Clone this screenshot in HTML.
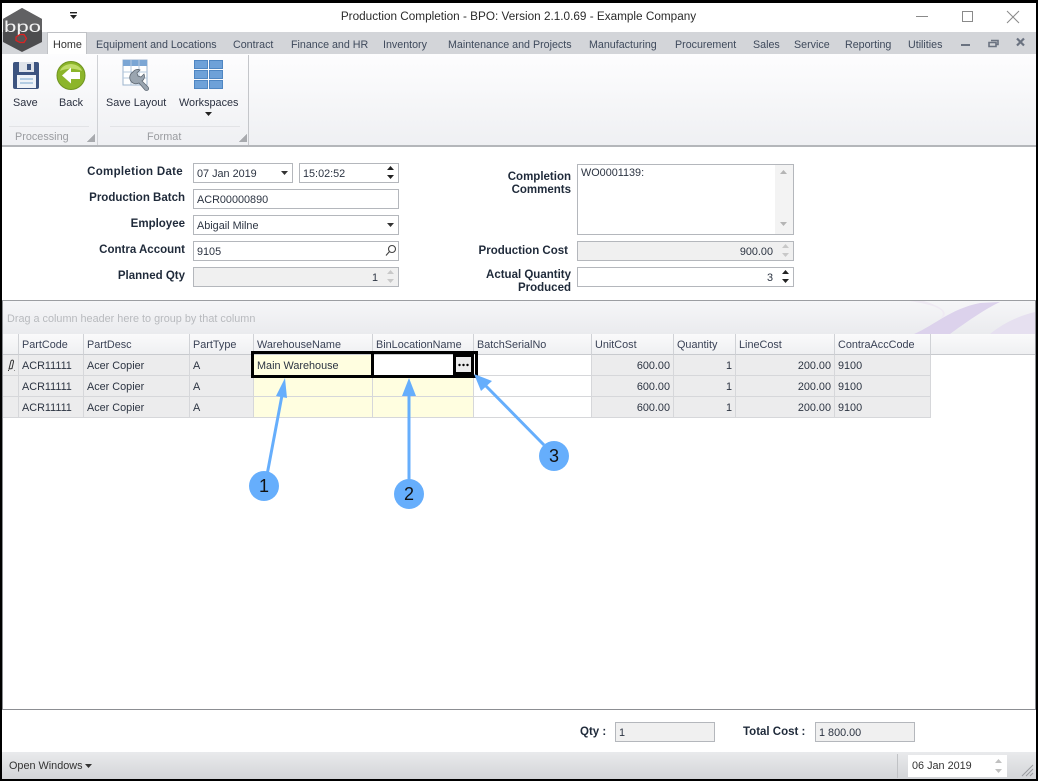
<!DOCTYPE html>
<html><head><meta charset="utf-8"><style>
*{box-sizing:border-box}
html,body{margin:0;padding:0;width:1038px;height:781px;overflow:hidden;background:#fff}
body{position:relative;font:10.85px/14px "Liberation Sans",sans-serif;color:#2a3040}
div,span.a{position:absolute;white-space:nowrap}
svg{position:absolute;overflow:visible}
.tab{top:38px;color:#3f4a5c;font-size:10.7px}
.lb{font-weight:bold;color:#1f2a3a;text-align:right;font-size:11.5px;line-height:13px}
.in{background:#fff;border:1px solid #b4b7bc;height:20px;padding:3px 0 0 3px;color:#2c3442}
.dis{background:#f0f0f0}
.gh{top:334px;height:21px;background:linear-gradient(#fafafb,#eff0f2);border-right:1px solid #d0d2d6;border-bottom:1px solid #c8cace;padding:4px 0 0 3px;color:#3a4256}
.c{height:21px;border-right:1px solid #d6d7da;border-bottom:1px solid #d6d7da;padding:4px 3px 0 3px;color:#2c3442}
.g{background:#ececed}.y{background:#fffee0}.w{background:#fff}.r{text-align:right}
</style></head><body>
<!-- title bar -->
<div style="left:0;top:0;width:1038px;height:32px;background:#fff"></div>
<div style="left:0;top:10px;width:1037px;text-align:center;font-size:11.75px;line-height:14px;color:#2b2b2b">Production Completion - BPO: Version 2.1.0.69 - Example Company</div>
<svg style="left:69px;top:12px" width="10" height="9"><rect x="1" y="0" width="7" height="1.4" fill="#222"/><path d="M1 3h7L4.500 7z" fill="#222"/></svg>
<svg style="left:915px;top:8px" width="110" height="16" fill="none" stroke="#8a8a8a"><path d="M1 8.500h12M47.500 3.500h10v10h-10zM92 3l12 12M104 3L92 15"/></svg>
<!-- tab bar -->
<div style="left:0;top:32px;width:1038px;height:22px;background:#d3d5d9"></div>
<div style="left:47px;top:32px;width:40px;height:23px;background:#fff;border:1px solid #c0c2c6;border-bottom:0;color:#333;padding:5px 0 0 5px">Home</div>
<div class="tab" style="left:96px">Equipment and Locations</div>
<div class="tab" style="left:233px">Contract</div>
<div class="tab" style="left:291px">Finance and HR</div>
<div class="tab" style="left:383px">Inventory</div>
<div class="tab" style="left:448px">Maintenance and Projects</div>
<div class="tab" style="left:589px">Manufacturing</div>
<div class="tab" style="left:675px">Procurement</div>
<div class="tab" style="left:753px">Sales</div>
<div class="tab" style="left:794px">Service</div>
<div class="tab" style="left:845px">Reporting</div>
<div class="tab" style="left:908px">Utilities</div>
<svg style="left:960px;top:37px" width="68" height="12"><rect x="1" y="7" width="9" height="2" fill="#6a7280"/><path d="M31 3.500h7v4h-2M29 5.500h7v4h-7z" fill="none" stroke="#6a7280" stroke-width="1.600"/><path d="M57 1.500l7 7M64 1.500l-7 7" stroke="#6a7280" stroke-width="2.200"/></svg>
<!-- ribbon -->
<div style="left:0;top:54px;width:1038px;height:93px;background:linear-gradient(#fdfdfe,#eff0f3);border-bottom:2px solid #b4b6ba"></div>
<div style="left:97px;top:55px;width:1px;height:90px;background:#cfd1d5"></div>
<div style="left:248px;top:55px;width:1px;height:90px;background:#c4c6ca"></div>
<div style="left:9px;top:126px;width:80px;height:1px;background:#e2e3e6"></div>
<div style="left:110px;top:126px;width:130px;height:1px;background:#e2e3e6"></div>
<div style="left:87px;top:134px;width:8px;height:8px;background:linear-gradient(135deg,transparent 50%,#a8aaae 50%)" ></div>
<div style="left:239px;top:134px;width:8px;height:8px;background:linear-gradient(135deg,transparent 50%,#a8aaae 50%)"></div>
<!-- save icon -->
<svg style="left:12px;top:61px" width="28" height="28"><rect x="1" y="1" width="26" height="27" rx="2" fill="#3d5480"/><rect x="7" y="1" width="15" height="10" fill="#dfe3ea"/><rect x="15" y="3" width="4" height="6" fill="#3d5480"/><rect x="5" y="14" width="19" height="13" fill="#eef2f8"/><path d="M8 18h13M8 22h13" stroke="#9fc0dc" stroke-width="1.500"/></svg>
<!-- back icon -->
<svg style="left:56px;top:61px" width="30" height="30"><circle cx="15" cy="14.500" r="14" fill="#8cb52a" stroke="#6f9420"/><path d="M15 3a12 9 0 0 1 11 7c-7-3-15-3-22 0a12 9 0 0 1 11-7z" fill="#c0dc6a"/><path d="M5 14.500l9-8v4.500h9v7h-9v4.500z" fill="#fff" transform="translate(1 0)"/></svg>
<!-- save layout icon -->
<svg style="left:122px;top:59px" width="30" height="32"><rect x="1" y="1" width="24" height="25" fill="#fff" stroke="#9db4ce"/><rect x="1" y="1" width="24" height="6" fill="#7ba6d4"/><path d="M1 13h24M1 19h24M9 1v25M17 1v25" stroke="#b4c8de"/><path d="M11 13a5.500 5.500 0 0 1 7-2l-3 3 1 3 3 1 3-3a5.500 5.500 0 0 1-2 7l6 6a2 2 0 0 1-3 3l-6-7a5.500 5.500 0 0 1-6-11z" fill="#9aa5b0" stroke="#5e6873" stroke-width=".8"/></svg>
<!-- workspaces icon -->
<svg style="left:194px;top:60px" width="30" height="30" fill="#6ea1d8" stroke="#4f86c2"><rect x=".5" y=".5" width="13" height="8"/><rect x="15.500" y=".5" width="13" height="8"/><rect x=".5" y="10.500" width="13" height="8"/><rect x="15.500" y="10.500" width="13" height="8"/><rect x=".5" y="20.500" width="13" height="8"/><rect x="15.500" y="20.500" width="13" height="8"/></svg>
<div style="left:13px;top:96px">Save</div>
<div style="left:59px;top:96px">Back</div>
<div style="left:106px;top:96px">Save Layout</div>
<div style="left:179px;top:96px">Workspaces</div>
<svg style="left:205px;top:112px" width="8" height="5"><path d="M0 0h7L3.500 4z" fill="#222"/></svg>
<div style="left:15px;top:130px;color:#9a9ca0">Processing</div>
<div style="left:147px;top:130px;color:#9a9ca0">Format</div>
<!-- form labels -->
<div class="lb" style="right:855px;top:166px;letter-spacing:.3px">Completion Date</div>
<div class="lb" style="right:853px;top:192px">Production Batch</div>
<div class="lb" style="right:853px;top:218px">Employee</div>
<div class="lb" style="right:853px;top:244px">Contra Account</div>
<div class="lb" style="right:853px;top:270px">Planned Qty</div>
<div class="lb" style="right:467px;top:171px">Completion<br>Comments</div>
<div class="lb" style="right:470px;top:245px">Production Cost</div>
<div class="lb" style="right:467px;top:269px">Actual Quantity<br>Produced</div>
<!-- fields -->
<div class="in" style="left:193px;top:163px;width:100px">07 Jan 2019</div>
<svg style="left:281px;top:171px" width="8" height="5"><path d="M0 0h7L3.500 4z" fill="#333"/></svg>
<div class="in" style="left:299px;top:163px;width:100px">15:02:52</div>
<svg style="left:387px;top:165px" width="8" height="16" fill="#222"><path d="M0 5h7L3.500 1zM0 10h7L3.500 14z"/></svg>
<div class="in" style="left:193px;top:189px;width:206px">ACR00000890</div>
<div class="in" style="left:193px;top:215px;width:206px">Abigail Milne</div>
<svg style="left:387px;top:223px" width="8" height="5"><path d="M0 0h7L3.500 4z" fill="#333"/></svg>
<div class="in" style="left:193px;top:241px;width:206px">9105</div>
<svg style="left:385px;top:244px" width="12" height="13" fill="none" stroke="#444" stroke-width="1.100"><circle cx="7" cy="5" r="3.500"/><path d="M4.500 7.500L1 11.500"/></svg>
<div class="in dis" style="left:193px;top:267px;width:206px;text-align:right;padding-right:20px">1</div>
<svg style="left:387px;top:270px" width="8" height="14" fill="#c8c8c8"><path d="M0 4h7L3.500 0zM0 9h7L3.500 13z"/></svg>
<div class="in" style="left:577px;top:164px;width:217px;height:71px;padding-top:1px">WO0001139:</div>
<div style="left:775px;top:165px;width:18px;height:69px;background:#f3f3f3"></div>
<svg style="left:780px;top:170px" width="8" height="60" fill="#b5b5b5"><path d="M0 4h7L3.500 0zM0 52h7L3.500 56z"/></svg>
<div class="in dis" style="left:577px;top:241px;width:217px;text-align:right;padding-right:20px">900.00</div>
<svg style="left:782px;top:244px" width="8" height="14" fill="#c8c8c8"><path d="M0 4h7L3.500 0zM0 9h7L3.500 13z"/></svg>
<div class="in" style="left:577px;top:267px;width:217px;text-align:right;padding-right:20px">3</div>
<svg style="left:782px;top:270px" width="8" height="14" fill="#222"><path d="M0 4h7L3.500 0zM0 9h7L3.500 13z"/></svg>
<!-- grid panel -->
<div style="left:2px;top:300px;width:1034px;height:410px;background:#fff;border-top:1px solid #9c9ea2;border-bottom:1px solid #8c8e92;border-left:1px solid #8c8e92;border-right:1px solid #8c8e92"></div>
<div style="left:3px;top:301px;width:1032px;height:33px;background:linear-gradient(#f6f6f8,#eaebee)"></div>
<svg style="left:900px;top:301px" width="135" height="33"><path d="M14 33C35 24 50 8 80 2L100 1C85 8 65 22 50 33z" fill="#dcd2ec"/><path d="M24 0C40 5 52 12 40 18 48 10 40 5 10 0z" fill="#efeaf3"/><path d="M90 33c12-10 28-18 45-22v22z" fill="#e6e0f0"/></svg>
<div style="left:7px;top:312px;color:#b8babe">Drag a column header here to group by that column</div>
<div style="left:3px;top:334px;width:1032px;height:21px;background:linear-gradient(#fafafb,#eff0f2);border-bottom:1px solid #c8cace"></div>
<div class="gh" style="left:3px;width:16px"></div>
<div class="gh" style="left:19px;width:65px">PartCode</div>
<div class="gh" style="left:84px;width:106px">PartDesc</div>
<div class="gh" style="left:190px;width:64px">PartType</div>
<div class="gh" style="left:254px;width:119px">WarehouseName</div>
<div class="gh" style="left:373px;width:101px">BinLocationName</div>
<div class="gh" style="left:474px;width:118px">BatchSerialNo</div>
<div class="gh" style="left:592px;width:82px">UnitCost</div>
<div class="gh" style="left:674px;width:62px">Quantity</div>
<div class="gh" style="left:736px;width:99px">LineCost</div>
<div class="gh" style="left:835px;width:96px">ContraAccCode</div>
<!-- rows -->
<div class="c g" style="left:3px;top:355px;width:16px"></div><div class="c g" style="left:3px;top:376px;width:16px"></div><div class="c g" style="left:3px;top:397px;width:16px"></div>
<svg style="left:6px;top:359px" width="10" height="13" fill="none" stroke="#333"><path d="M3 10L5 2c.5-1.500 3-1 2.500.8L6 9.500z"/><path d="M2 11.500h1M8 11.500h.5"/></svg>
<div class="c g" style="left:19px;top:355px;width:65px">ACR11111</div><div class="c g" style="left:84px;top:355px;width:106px">Acer Copier</div><div class="c g" style="left:190px;top:355px;width:64px">A</div>
<div class="c y" style="left:254px;top:355px;width:119px">Main Warehouse</div><div class="c w" style="left:373px;top:355px;width:101px"></div><div class="c w" style="left:474px;top:355px;width:118px"></div>
<div class="c g r" style="left:592px;top:355px;width:82px">600.00</div><div class="c g r" style="left:674px;top:355px;width:62px">1</div><div class="c g r" style="left:736px;top:355px;width:99px">200.00</div><div class="c g" style="left:835px;top:355px;width:96px">9100</div>
<div class="c g" style="left:19px;top:376px;width:65px">ACR11111</div><div class="c g" style="left:84px;top:376px;width:106px">Acer Copier</div><div class="c g" style="left:190px;top:376px;width:64px">A</div>
<div class="c y" style="left:254px;top:376px;width:119px"></div><div class="c y" style="left:373px;top:376px;width:101px"></div><div class="c w" style="left:474px;top:376px;width:118px"></div>
<div class="c g r" style="left:592px;top:376px;width:82px">600.00</div><div class="c g r" style="left:674px;top:376px;width:62px">1</div><div class="c g r" style="left:736px;top:376px;width:99px">200.00</div><div class="c g" style="left:835px;top:376px;width:96px">9100</div>
<div class="c g" style="left:19px;top:397px;width:65px">ACR11111</div><div class="c g" style="left:84px;top:397px;width:106px">Acer Copier</div><div class="c g" style="left:190px;top:397px;width:64px">A</div>
<div class="c y" style="left:254px;top:397px;width:119px"></div><div class="c y" style="left:373px;top:397px;width:101px"></div><div class="c w" style="left:474px;top:397px;width:118px"></div>
<div class="c g r" style="left:592px;top:397px;width:82px">600.00</div><div class="c g r" style="left:674px;top:397px;width:62px">1</div><div class="c g r" style="left:736px;top:397px;width:99px">200.00</div><div class="c g" style="left:835px;top:397px;width:96px">9100</div>
<!-- annotations -->
<div style="left:251px;top:351px;width:123px;height:27px;border:3px solid #000"></div>
<div style="left:371px;top:351px;width:107px;height:27px;border:3px solid #000"></div>
<div style="left:453px;top:354px;width:21px;height:21px;background:#ececec;border:3px solid #000"></div>
<svg style="left:0;top:0" width="1038" height="781"><circle cx="459.500" cy="365" r="1.200" fill="#000"/><circle cx="463.500" cy="365" r="1.200" fill="#000"/><circle cx="467.500" cy="365" r="1.200" fill="#000"/>
<g stroke="#66aefc" stroke-width="3" fill="none"><path d="M267 475L283 390"/><path d="M409 482V390"/><path d="M544 445L484 384"/></g>
<g fill="#66aefc"><path d="M285 378L276 396 287 398z"/><path d="M409 378L402 396H416z"/><path d="M474 374L481 391 492 381z"/><circle cx="264" cy="486" r="15"/><circle cx="409" cy="494" r="15"/><circle cx="554" cy="456" r="15"/></g>
<g font-family="Liberation Sans,sans-serif" font-size="18" fill="#111" text-anchor="middle"><text x="264" y="492">1</text><text x="409" y="500">2</text><text x="554" y="462">3</text></g></svg>
<!-- footer -->
<div class="lb" style="left:580px;top:726px">Qty :</div>
<div class="in dis" style="left:615px;top:722px;width:100px">1</div>
<div class="lb" style="left:743px;top:726px">Total Cost :</div>
<div class="in dis" style="left:815px;top:722px;width:100px">1 800.00</div>
<div style="left:0;top:752px;width:1038px;height:27px;background:linear-gradient(#e9eaec,#d3d5d8)"></div>
<div style="left:9px;top:759px;color:#333">Open Windows</div>
<svg style="left:85px;top:764px" width="7" height="4"><path d="M0 0h7L3.500 4z" fill="#333"/></svg>
<div style="left:897px;top:754px;width:1px;height:24px;background:#c0c2c5"></div>
<div style="left:908px;top:755px;width:99px;height:22px;background:#fff;padding:4px 0 0 4px;color:#333">06 Jan 2019</div>
<svg style="left:995px;top:759px" width="8" height="14" fill="#c0c0c0"><path d="M0 4h7L3.500 0zM0 10h7L3.500 14z"/></svg>
<svg style="left:1021px;top:764px" width="13" height="13" stroke="#9a9ca0"><path d="M1 12L12 1M5 12l7-7M9 12l3-3"/></svg>
<!-- logo -->
<svg style="left:2px;top:8px" width="42" height="46"><path d="M20 0L40 11V34L20 44 1 34V11z" fill="#4c4c4e"/><path d="M20 0L40 11V22H1V11z" fill="#616163"/><text x="20.500" y="24" font-family="Liberation Sans,sans-serif" font-size="16" fill="#f2f2f2" text-anchor="middle" textLength="37" lengthAdjust="spacingAndGlyphs">bpo</text><path d="M14 29l4-2.500 4 0 2.500 4-2.500 4h-4l-4-2z" fill="#555" stroke="#d22" stroke-width="1.300"/></svg>
<!-- window border -->
<div style="left:0;top:0;width:1038px;height:781px;border:2px solid #000;border-top-width:3px"></div>
</body></html>
